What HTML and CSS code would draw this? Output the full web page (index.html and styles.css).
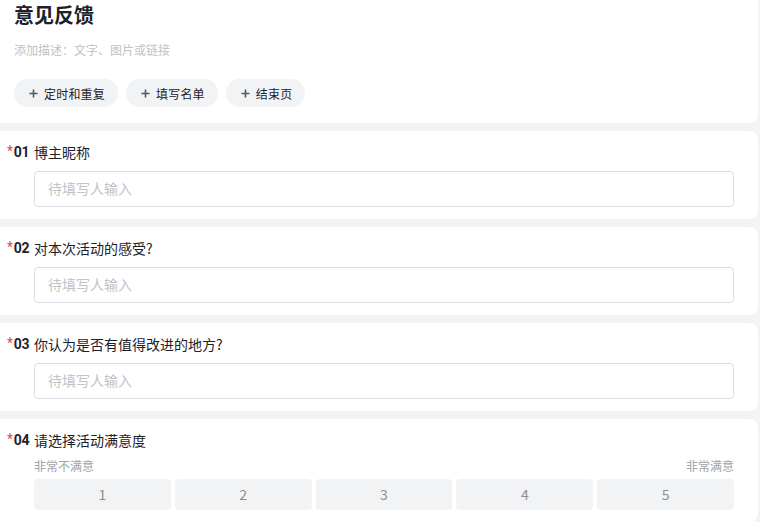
FILE: index.html
```html
<!DOCTYPE html>
<html>
<head>
  <meta charset="utf-8">
  <title>意见反馈</title>
  <link rel="stylesheet" href="styles.css">
</head>
<body>
  <div class="form-page">
    <div class="card header-card">
      <h1 class="form-title">意见反馈</h1>
      <p class="form-desc">添加描述：文字、图片或链接</p>
      <div class="actions">
        <button class="chip"><svg class="plus" viewBox="0 0 10 10"><path d="M5 0.5v9M0.5 5h9"/></svg>定时和重复</button>
        <button class="chip"><svg class="plus" viewBox="0 0 10 10"><path d="M5 0.5v9M0.5 5h9"/></svg>填写名单</button>
        <button class="chip"><svg class="plus" viewBox="0 0 10 10"><path d="M5 0.5v9M0.5 5h9"/></svg>结束页</button>
      </div>
    </div>

    <div class="card question">
      <div class="q-title"><span class="q-no"><span class="req">*</span>01</span>博主昵称</div>
      <div class="q-body">
        <div class="text-input">待填写人输入</div>
      </div>
    </div>

    <div class="card question">
      <div class="q-title"><span class="q-no"><span class="req">*</span>02</span>对本次活动的感受?</div>
      <div class="q-body">
        <div class="text-input">待填写人输入</div>
      </div>
    </div>

    <div class="card question">
      <div class="q-title"><span class="q-no"><span class="req">*</span>03</span>你认为是否有值得改进的地方?</div>
      <div class="q-body">
        <div class="text-input">待填写人输入</div>
      </div>
    </div>

    <div class="card question">
      <div class="q-title"><span class="q-no"><span class="req">*</span>04</span>请选择活动满意度</div>
      <div class="q-body">
        <div class="scale-labels"><span>非常不满意</span><span>非常满意</span></div>
        <div class="scale">
          <div class="scale-item">1</div>
          <div class="scale-item">2</div>
          <div class="scale-item">3</div>
          <div class="scale-item">4</div>
          <div class="scale-item">5</div>
        </div>
      </div>
    </div>
  </div>
</body>
</html>
```

FILE: styles.css
```css
body {
  margin: 0;
  background: #f2f3f5;
  font-family: "Noto Sans CJK SC", "Noto Sans", sans-serif;
  color: #1d2129;
}
.form-page {
  display: flex;
  flex-direction: column;
  gap: 8px;
  padding-right: 2px;
}
.card {
  background: #fff;
  border-radius: 0 8px 8px 0;
}
.header-card {
  padding: 1px 14px 16px;
  border-radius: 0 0 8px 0;
}
.form-title {
  margin: 0;
  font-size: 20px;
  line-height: 28px;
  font-weight: 700;
}
.form-desc {
  margin: 11px 0 0;
  font-size: 12px;
  line-height: 20px;
  color: #c0c2c6;
}
.actions {
  display: flex;
  gap: 8px;
  margin-top: 19px;
}
.chip {
  display: flex;
  align-items: center;
  gap: 6px;
  height: 28px;
  padding: 0 13px 0 15px;
  border: none;
  border-radius: 14px;
  background: #f2f3f5;
  font-family: inherit;
  font-size: 12px;
  letter-spacing: 0.2px;
  color: #1d2129;
}
.plus {
  width: 9px;
  height: 9px;
  fill: none;
  stroke: #4e5969;
  stroke-width: 1.8;
}
.question {
  padding: 10px 24px 12px 0;
}
.q-title {
  display: flex;
  font-size: 14px;
  line-height: 22px;
}
.q-no {
  width: 27px;
  padding-left: 7px;
  font-family: "Roboto", sans-serif;
  font-weight: 700;
  font-size: 14px;
  letter-spacing: -0.3px;
}
.req {
  color: #f53f3f;
  font-weight: 400;
  position: relative;
  top: -1px;
  margin-right: 1px;
}
.q-body {
  margin-left: 34px;
  margin-top: 8px;
}
.text-input {
  height: 34px;
  border: 1px solid #dcdee2;
  border-radius: 4px;
  padding: 0 13px;
  font-size: 14px;
  line-height: 33px;
  color: #c0c4cc;
}
.scale-labels {
  display: flex;
  justify-content: space-between;
  margin-top: -2px;
  font-size: 12px;
  line-height: 17px;
  color: #a0a3a8;
}
.scale {
  display: grid;
  grid-template-columns: repeat(5, 1fr);
  gap: 4px;
  margin-top: 5px;
}
.scale-item {
  height: 31px;
  border-radius: 4px;
  background: #f2f3f5;
  text-align: center;
  line-height: 30px;
  font-size: 14px;
  color: #8c8f94;
}
```
